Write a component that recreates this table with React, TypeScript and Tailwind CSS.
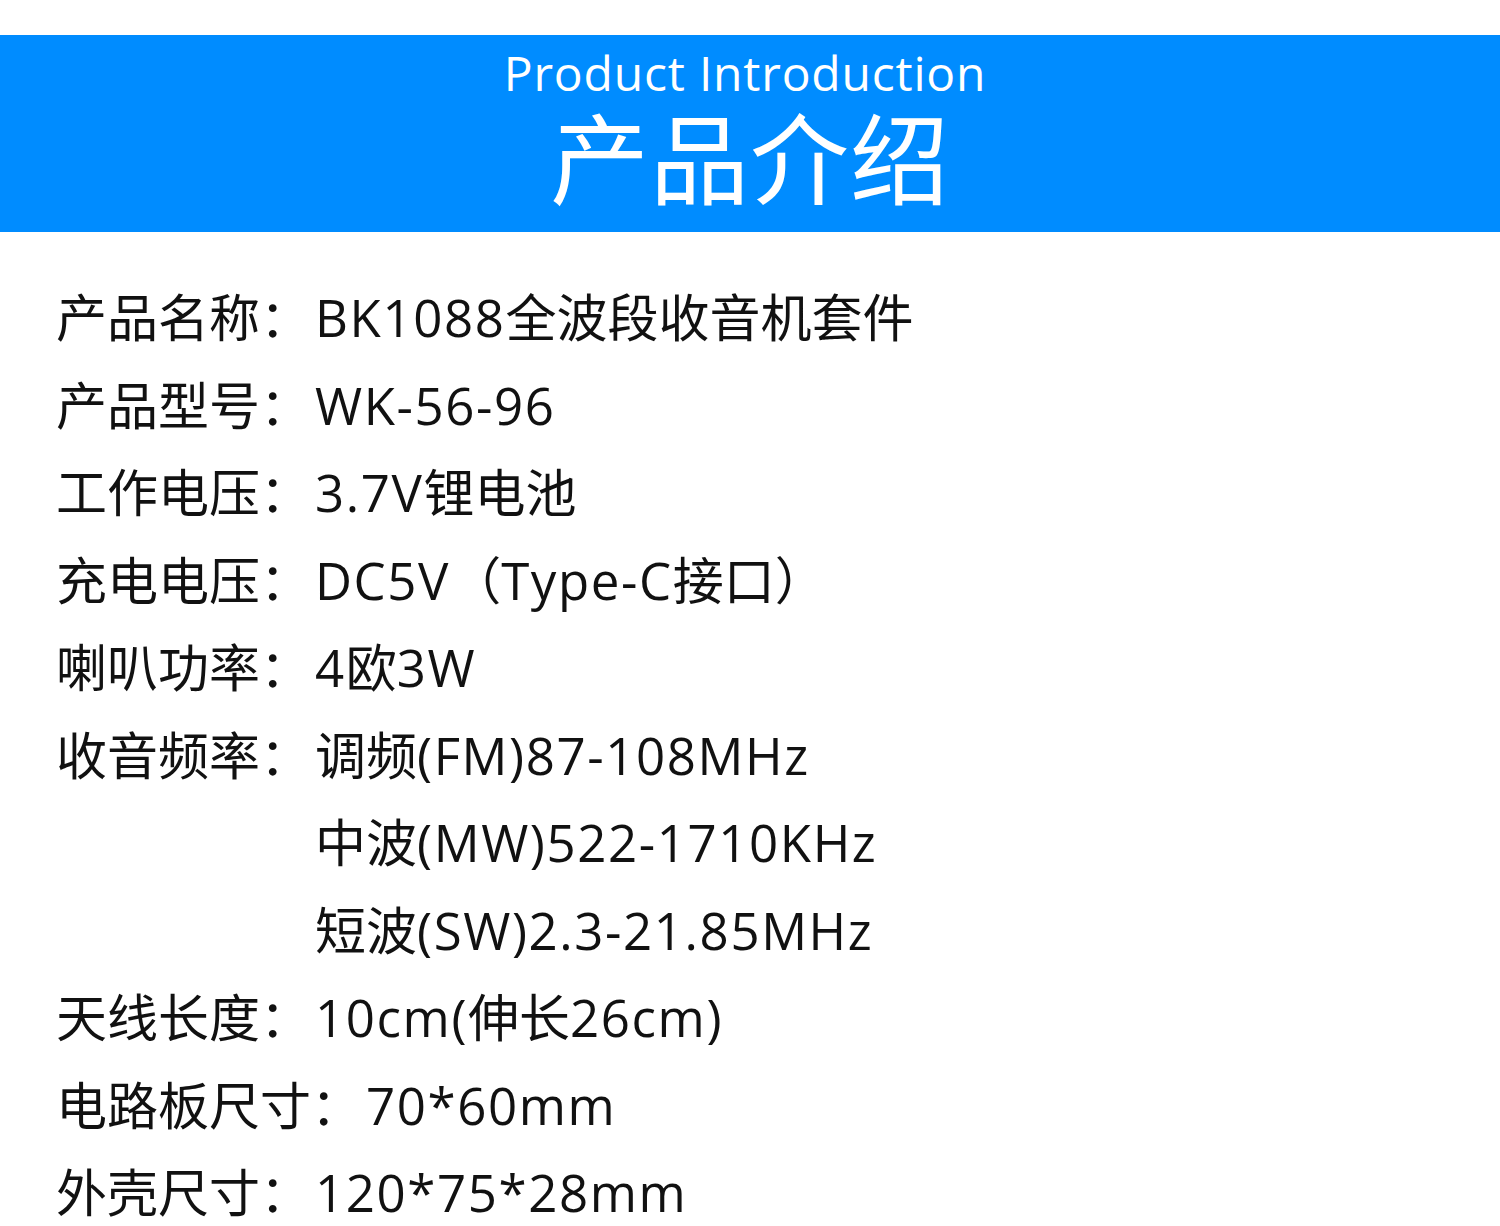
const rows: { label: string; values: string[] }[] = [
  { label: '产品名称：', values: ['BK1088全波段收音机套件'] },
  { label: '产品型号：', values: ['WK-56-96'] },
  { label: '工作电压：', values: ['3.7V锂电池'] },
  { label: '充电电压：', values: ['DC5V（Type-C接口）'] },
  { label: '喇叭功率：', values: ['4欧3W'] },
  { label: '收音频率：', values: ['调频(FM)87-108MHz', '中波(MW)522-1710KHz', '短波(SW)2.3-21.85MHz'] },
  { label: '天线长度：', values: ['10cm(伸长26cm)'] },
  { label: '电路板尺寸：', values: ['70*60mm'] },
  { label: '外壳尺寸：', values: ['120*75*28mm'] },
];

// latin runs get a little extra tracking so they read as wide as the original face
function Value({ text }: { text: string }) {
  const parts = text.split(/([\x20-\x7e]+)/).filter(Boolean);
  return (
    <span>
      {parts.map((p, i) =>
        /^[\x20-\x7e]+$/.test(p) ? (
          <span key={i} className="tracking-[1.6px]">{p}</span>
        ) : (
          <span key={i}>{p}</span>
        )
      )}
    </span>
  );
}

export default function App() {
  return (
    <div
      className="w-[1500px] h-[1226px] bg-white overflow-hidden"
      style={{ fontFamily: '"Open Sans", "Noto Sans CJK SC", sans-serif' }}
    >
      {/* Header band */}
      <div className="mt-[35px] h-[197px] bg-[#008cff] flex flex-col items-center text-white">
        <div className="mt-[12px] mr-[10px] text-[48px] leading-[52px] tracking-[0.8px]">Product Introduction</div>
        <div className="text-[99px] leading-[110px] font-['Noto_Sans_CJK_SC'] tracking-[1px]">产品介绍</div>
      </div>

      {/* Spec list */}
      <div className="pt-[42px] pl-[56px] text-[#111] text-[51px] leading-[87.5px]">
        {rows.map((row) =>
          row.values.map((v, i) => (
            <div key={row.label + i} className="flex whitespace-nowrap">
              <span className={i === 0 ? 'mr-[4px]' : 'mr-[4px] invisible'}>{i === 0 ? row.label : '收音频率：'}</span>
              <Value text={v} />
            </div>
          ))
        )}
      </div>
    </div>
  );
}
